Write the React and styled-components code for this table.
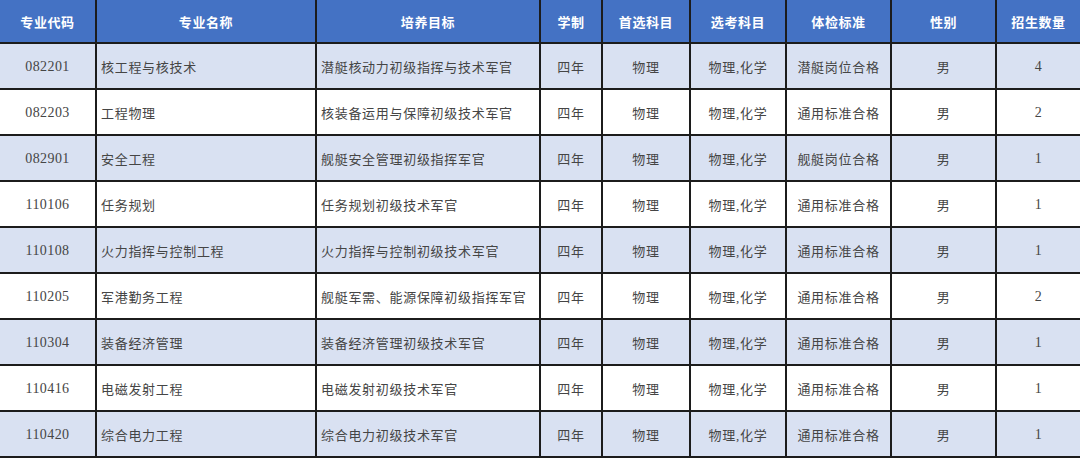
import styled, { createGlobalStyle } from 'styled-components';

const GlobalStyle = createGlobalStyle`
  html, body {
    margin: 0;
    padding: 0;
    background: #ffffff;
  }
`;

const Grid = styled.div`
  display: grid;
  width: 1080px;
  grid-template-columns: 95px 218px 222px 60px 86px 94px 103px 103px 83px;
  grid-template-rows: 42px repeat(9, 44px);
  column-gap: 2px;
  row-gap: 2px;
  padding-bottom: 2px;
  background: #1c1c1c;
`;

const HeadCell = styled.div`
  display: flex;
  align-items: center;
  justify-content: center;
  background: #4472c4;
  color: #ffffff;
  font-family: "Noto Sans CJK SC", "Noto Sans", sans-serif;
  font-weight: 700;
  font-size: 13px;
  letter-spacing: 0.6px;
`;

const Cell = styled.div`
  display: flex;
  align-items: center;
  justify-content: ${(p) => (p.$left ? 'flex-start' : 'center')};
  padding-left: ${(p) => (p.$left ? '4px' : '0')};
  padding-top: 1px;
  background: ${(p) => (p.$shaded ? '#d9e1f2' : '#ffffff')};
  color: #454545;
  font-family: "Liberation Serif", "Noto Sans CJK SC", serif;
  font-size: ${(p) => (p.$num ? '14px' : '13px')};
  font-weight: 400;
  letter-spacing: ${(p) => (p.$num ? '0.4px' : '0.7px')};
`;

const headers = ['专业代码', '专业名称', '培养目标', '学制', '首选科目', '选考科目', '体检标准', '性别', '招生数量'];

const rows = [
  ['082201', '核工程与核技术', '潜艇核动力初级指挥与技术军官', '四年', '物理', '物理,化学', '潜艇岗位合格', '男', '4'],
  ['082203', '工程物理', '核装备运用与保障初级技术军官', '四年', '物理', '物理,化学', '通用标准合格', '男', '2'],
  ['082901', '安全工程', '舰艇安全管理初级指挥军官', '四年', '物理', '物理,化学', '舰艇岗位合格', '男', '1'],
  ['110106', '任务规划', '任务规划初级技术军官', '四年', '物理', '物理,化学', '通用标准合格', '男', '1'],
  ['110108', '火力指挥与控制工程', '火力指挥与控制初级技术军官', '四年', '物理', '物理,化学', '通用标准合格', '男', '1'],
  ['110205', '军港勤务工程', '舰艇军需、能源保障初级指挥军官', '四年', '物理', '物理,化学', '通用标准合格', '男', '2'],
  ['110304', '装备经济管理', '装备经济管理初级技术军官', '四年', '物理', '物理,化学', '通用标准合格', '男', '1'],
  ['110416', '电磁发射工程', '电磁发射初级技术军官', '四年', '物理', '物理,化学', '通用标准合格', '男', '1'],
  ['110420', '综合电力工程', '综合电力初级技术军官', '四年', '物理', '物理,化学', '通用标准合格', '男', '1'],
];

export default function App() {
  return (
    <>
      <GlobalStyle />
      <Grid>
        {headers.map((h) => (
          <HeadCell key={h}>{h}</HeadCell>
        ))}
        {rows.map((row, r) =>
          row.map((value, c) => (
            <Cell
              key={`${r}-${c}`}
              $shaded={r % 2 === 0}
              $left={c === 1 || c === 2}
              $num={c === 0 || c === 8}
            >
              {value}
            </Cell>
          ))
        )}
      </Grid>
    </>
  );
}
